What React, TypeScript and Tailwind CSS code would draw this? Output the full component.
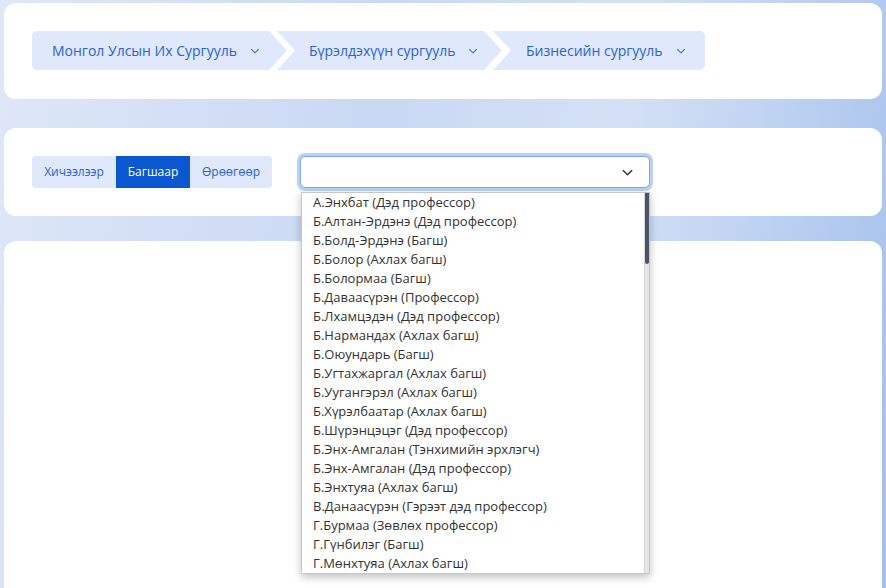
import React from "react";

const crumbs = [
  { label: "Монгол Улсын Их Сургууль", width: "w-[255px]", pad: "pl-[20px]", clip: "[clip-path:polygon(0_0,calc(100%-18px)_0,100%_50%,calc(100%-18px)_100%,0_100%)] rounded-l-[5px]", ml: "" },
  { label: "Бүрэлдэхүүн сургууль", width: "w-[225px]", pad: "pl-[32px]", clip: "[clip-path:polygon(0_0,calc(100%-18px)_0,100%_50%,calc(100%-18px)_100%,0_100%,18px_50%)]", ml: "-ml-[10px]" },
  { label: "Бизнесийн сургууль", width: "w-[212px]", pad: "pl-[33px]", clip: "[clip-path:polygon(0_0,100%_0,100%_100%,0_100%,18px_50%)] rounded-r-[5px]", ml: "-ml-[9px]" },
];

const teachers = [
  "А.Энхбат (Дэд профессор)",
  "Б.Алтан-Эрдэнэ (Дэд профессор)",
  "Б.Болд-Эрдэнэ (Багш)",
  "Б.Болор (Ахлах багш)",
  "Б.Болормаа (Багш)",
  "Б.Даваасүрэн (Профессор)",
  "Б.Лхамцэдэн (Дэд профессор)",
  "Б.Нармандах (Ахлах багш)",
  "Б.Оюундарь (Багш)",
  "Б.Угтахжаргал (Ахлах багш)",
  "Б.Уугангэрэл (Ахлах багш)",
  "Б.Хүрэлбаатар (Ахлах багш)",
  "Б.Шүрэнцэцэг (Дэд профессор)",
  "Б.Энх-Амгалан (Тэнхимийн эрхлэгч)",
  "Б.Энх-Амгалан (Дэд профессор)",
  "Б.Энхтуяа (Ахлах багш)",
  "В.Данаасүрэн (Гэрээт дэд профессор)",
  "Г.Бурмаа (Зөвлөх профессор)",
  "Г.Гүнбилэг (Багш)",
  "Г.Мөнхтуяа (Ахлах багш)",
];

const Chevron = ({ className }: { className?: string }) => (
  <svg viewBox="0 0 16 16" className={className} fill="none" stroke="currentColor" strokeWidth="1.6" strokeLinecap="round" strokeLinejoin="round">
    <path d="M3.5 6l4.5 4.5L12.5 6" />
  </svg>
);

const App = () => {
  return (
    <div
      className="w-[886px] h-[588px] overflow-hidden px-[4px] pt-[3px] bg-[linear-gradient(100deg,#dfe7f8_0%,#c9d8f3_40%,#d4e1f5_65%,#a3bfec_100%)]"
      style={{ fontFamily: '"Open Sans", "Noto Sans", sans-serif' }}
    >
      <div className="h-[96px] rounded-[12px] bg-white pt-[28px] pl-[28px]">
        <div className="flex">
          {crumbs.map((c, i) => (
            <div
              key={i}
              className={`${c.width} ${c.pad} ${c.clip} ${c.ml} h-[39px] bg-[#dfe9fb] flex items-center text-[14px] text-[#2a62d9]`}
            >
              <span>{c.label}</span>
              <Chevron className="w-[12px] h-[12px] ml-[12px] text-[#4a7be0]" />
            </div>
          ))}
        </div>
      </div>

      <div className="relative mt-[29px] h-[88px] rounded-[12px] bg-white pl-[28px] flex items-center z-10">
        <div className="flex h-[32px] rounded-[4px] bg-[#dfe9fb] text-[12px] text-[#2a62d9] overflow-hidden">
          <div className="w-[84px] flex items-center justify-center">Хичээлээр</div>
          <div className="w-[74px] flex items-center justify-center bg-[#0b57d0] text-white">Багшаар</div>
          <div className="w-[82px] flex items-center justify-center">Өрөөгөөр</div>
        </div>
        <div className="relative ml-[28px]">
          <div className="w-[350px] h-[32px] rounded-[5px] border border-[#7ea8ee] bg-white ring-[3px] ring-[#b9d1f8] flex items-center justify-end pr-[14px]">
            <Chevron className="w-[15px] h-[15px] text-[#444]" />
          </div>
          <div className="absolute left-[1px] top-[36px] w-[349px] h-[382px] bg-white border border-[#c8c8c8] shadow-[0_3px_8px_rgba(0,0,0,0.25)] flex">
            <div className="flex-1">
              {teachers.map((t) => (
                <div key={t} className="h-[19px] leading-[19px] pl-[11px] text-[13px] text-[#333]">
                  {t}
                </div>
              ))}
            </div>
            <div className="w-[5px] bg-[#e6e6e6] border-l border-[#d8d8d8]">
              <div className="h-[71px] rounded-b-[2px] bg-[#4b5568]" />
            </div>
          </div>
        </div>
      </div>

      <div className="mt-[25px] h-[400px] rounded-t-[12px] bg-white" />
    </div>
  );
};

export default App;
